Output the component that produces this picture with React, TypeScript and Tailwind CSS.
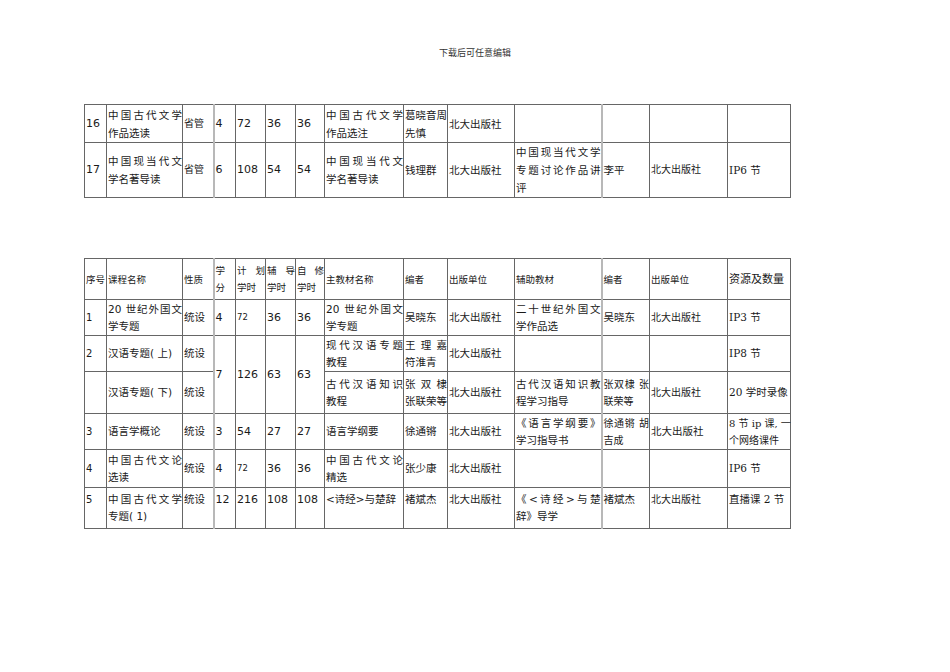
import React from 'react';

type Cell = { t: string | string[]; c?: string; rs?: number };

const G = 'border-l-2 border-l-[#b8b8b8]';
const NUM = 'text-[11px]';
const SM = 'text-[10px]';
const SERIF = "font-['DejaVu_Serif','Noto_Sans_CJK_SC',serif]";

const c = (t: string | string[], cls = '', rs?: number): Cell => ({ t, c: cls, rs });

const widths = [
  'w-[22px]', 'w-[76px]', 'w-[31px]', 'w-[22px]', 'w-[30px]', 'w-[30px]', 'w-[29px]',
  'w-[79px]', 'w-[44px]', 'w-[67px]', 'w-[87px]', 'w-[48px]', 'w-[78px]', 'w-[63px]',
];

type Row = { h: string; top?: boolean; cells: Cell[] };

const table1: Row[] = [
  {
    h: 'h-[38px]',
    cells: [
      c('16', NUM), c(['中国古代文学', '作品选读']), c('省管', SM), c('4', NUM + ' ' + G),
      c('72', NUM), c('36', NUM), c('36', NUM), c(['中国古代文学', '作品选注']),
      c(['葛晓音周', '先慎']), c('北大出版社'), c(''), c('', G), c(''), c(''),
    ],
  },
  {
    h: 'h-[55px]',
    cells: [
      c('17', NUM), c(['中国现当代文', '学名著导读']), c('省管', SM), c('6', NUM + ' ' + G),
      c('108', NUM), c('54', NUM), c('54', NUM), c(['中国现当代文', '学名著导读']),
      c('钱理群'), c('北大出版社'), c(['中国现当代文学', '专题讨论作品讲', '评']),
      c('李平', G), c('北大出版社', SM), c('IP6 节', SERIF),
    ],
  },
];

const table2: Row[] = [
  {
    h: 'h-[41px]',
    cells: [
      c('序号', 'text-[9.5px]'), c('课程名称', 'text-[9.5px]'), c('性质', 'text-[9.5px]'),
      c(['学', '分'], 'text-[9.5px] ' + G), c(['计划', '学时'], 'text-[9.5px]'),
      c(['辅导', '学时'], 'text-[9.5px]'), c(['自修', '学时'], 'text-[9.5px]'),
      c('主教材名称', 'text-[9.5px]'), c('编者', 'text-[9.5px]'), c('出版单位', 'text-[9.5px]'),
      c('辅助教材', 'text-[9.5px]'), c('编者', 'text-[9.5px] ' + G), c('出版单位', 'text-[9.5px]'),
      c('资源及数量', 'text-[11px]'),
    ],
  },
  {
    h: 'h-[36px]',
    cells: [
      c('1', SM), c(['20 世纪外国文', '学专题']), c('统设'), c('4', NUM + ' ' + G),
      c('72', 'text-[8.5px]'), c('36', NUM), c('36', NUM), c(['20 世纪外国文', '学专题']),
      c('吴晓东'), c('北大出版社'), c(['二十世纪外国文', '学作品选']), c('吴晓东', G),
      c('北大出版社', SM), c('IP3 节', SERIF),
    ],
  },
  {
    h: 'h-[36px]',
    cells: [
      c('2', SM), c('汉语专题( 上)'), c('统设'), c('7', NUM + ' ' + G, 2), c('126', NUM, 2),
      c('63', NUM, 2), c('63', NUM, 2), c(['现代汉语专题', '教程']), c(['王理嘉', '符淮青']),
      c('北大出版社'), c(''), c('', G), c(''), c('IP8 节', SERIF),
    ],
  },
  {
    h: 'h-[42px]',
    cells: [
      c(''), c('汉语专题( 下)'), c('统设'), c(['古代汉语知识', '教程']),
      c(['张双棣', '张联荣等']), c('北大出版社'), c(['古代汉语知识教', '程学习指导']),
      c(['张双棣 张', '联荣等'], 'text-[10px] ' + G), c('北大出版社', SM), c('20 学时录像', SERIF),
    ],
  },
  {
    h: 'h-[36px]',
    cells: [
      c('3', SM), c('语言学概论'), c('统设'), c('3', NUM + ' ' + G), c('54', NUM),
      c('27', NUM), c('27', NUM), c('语言学纲要'), c('徐通锵'), c('北大出版社'),
      c(['《语言学纲要》', '学习指导书']), c(['徐通锵 胡', '吉成'], 'text-[10px] ' + G), c('北大出版社'),
      c(['8 节 ip 课, 一', '个网络课件'], 'text-[10px] ' + SERIF),
    ],
  },
  {
    h: 'h-[38px]',
    cells: [
      c('4', SM), c(['中国古代文论', '选读']), c('统设'), c('4', NUM + ' ' + G),
      c('72', 'text-[8.5px]'), c('36', NUM), c('36', NUM), c(['中国古代文论', '精选']),
      c('张少康'), c('北大出版社'), c(''), c('', G), c(''), c('IP6 节', SERIF),
    ],
  },
  {
    h: 'h-[41px]',
    top: true,
    cells: [
      c('5', SM), c(['中国古代文学', '专题( 1)']), c('统设'), c('12', NUM + ' ' + G),
      c('216', NUM), c('108', NUM), c('108', NUM), c('<诗经>与楚辞'), c('褚斌杰'),
      c('北大出版社'), c(['《<诗经>与楚', '辞》导学']), c('褚斌杰', G), c('北大出版社', SM),
      c('直播课 2 节', SERIF),
    ],
  },
];

function Td({ cell, top, lh }: { cell: Cell; top?: boolean; lh: string }) {
  const lines = Array.isArray(cell.t) ? cell.t : [cell.t];
  return (
    <td
      rowSpan={cell.rs}
      className={`border border-[#666] pl-[1px] pr-0 ${lh} ${top ? 'align-top pt-[3px]' : 'align-middle'} ${cell.c}`}
    >
      {lines.map((l, i) => (
        <span
          key={i}
          className={
            i < lines.length - 1
              ? 'block whitespace-nowrap break-keep text-justify [text-align-last:justify]'
              : 'block whitespace-nowrap'
          }
        >
          {l}
        </span>
      ))}
    </td>
  );
}

function Sheet({ rows, lh, className }: { rows: Row[]; lh: string; className?: string }) {
  return (
    <table className={`table-fixed border-collapse w-[706px] ${className ?? ''}`}>
      <colgroup>
        {widths.map((w, i) => (
          <col key={i} className={w} />
        ))}
      </colgroup>
      <tbody>
        {rows.map((r, i) => (
          <tr key={i} className={r.h}>
            {r.cells.map((cell, j) => (
              <Td key={j} cell={cell} top={r.top} lh={lh} />
            ))}
          </tr>
        ))}
      </tbody>
    </table>
  );
}

export default function App() {
  return (
    <div className="min-h-[672px] w-[950px] bg-white text-[#1a1a1a] text-[10.5px] font-['DejaVu_Sans','Noto_Sans_CJK_SC',sans-serif]">
      <div className="pt-[47px] text-center text-[9px] leading-[12px] text-[#333]">
        下载后可任意编辑
      </div>
      <div className="pl-[84px]">
        <Sheet rows={table1} lh="leading-[18px]" className="mt-[45px]" />
        <Sheet rows={table2} lh="leading-[17px]" className="mt-[60px]" />
      </div>
    </div>
  );
}
